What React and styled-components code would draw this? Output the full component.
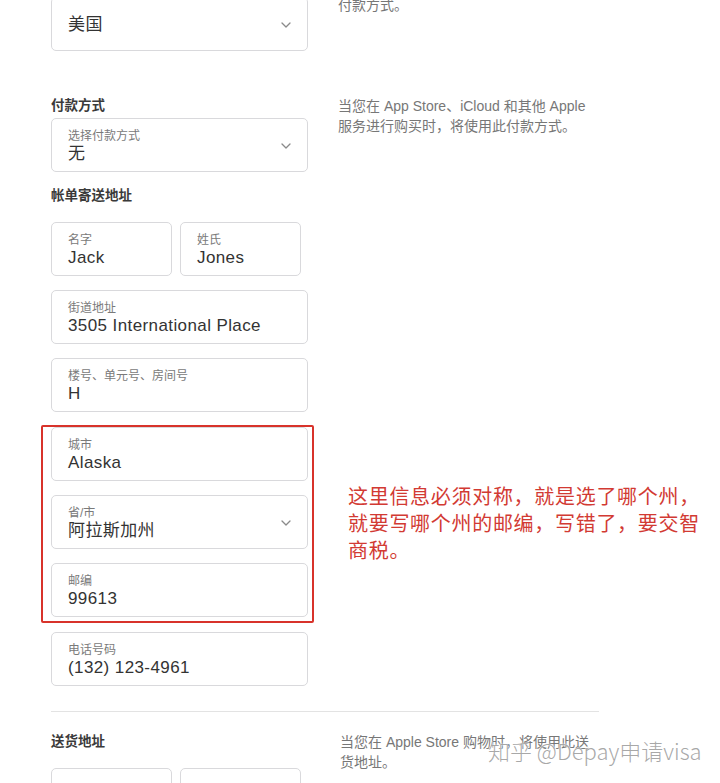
import React from "react";
import styled, { createGlobalStyle } from "styled-components";

const Global = createGlobalStyle`
  html, body { margin: 0; padding: 0; background: #fff; overflow: hidden; }
  body { font-family: "Liberation Sans", "Noto Sans CJK SC", sans-serif; color: #333; }
  * { box-sizing: border-box; }
`;

const Page = styled.div`
  position: relative;
  margin-top: -5px;
  padding-left: 51px;
  height: 788px;
  overflow: hidden;
`;

const Section = styled.section`
  display: grid;
  grid-template-columns: 257px 252px;
  column-gap: 30px;
  align-items: start;
  margin-top: ${(p) => p.$mt || 0}px;
`;

const Column = styled.div`
  display: flex;
  flex-direction: column;
  margin-top: ${(p) => p.$mt || 0}px;
`;

const Heading = styled.h3`
  margin: 0;
  font-size: 13.5px;
  line-height: 20px;
  font-weight: 700;
  color: #3a3a3a;
  margin-top: ${(p) => p.$mt || 0}px;
`;

const Desc = styled.p`
  margin: 0;
  font-size: 14px;
  line-height: 20px;
  color: #777;
  margin-left: ${(p) => p.$ml || 0}px;
`;

const Stack = styled.div`
  display: flex;
  flex-direction: column;
  gap: 14px;
  margin-top: ${(p) => p.$mt || 0}px;
`;

const Row = styled.div`
  display: flex;
  gap: 8px;
  margin-top: ${(p) => p.$mt || 0}px;
`;

const Box = styled.div`
  position: relative;
  width: ${(p) => p.$w || 257}px;
  height: 54px;
  border: 1px solid #d9d9dc;
  border-radius: 5px;
  background: #fff;
  padding: ${(p) => (p.$plain ? "0 16px" : "10px 16px 0")};
  display: flex;
  flex-direction: column;
  justify-content: ${(p) => (p.$plain ? "center" : "flex-start")};
`;

const Label = styled.div`
  font-size: 12px;
  line-height: 14px;
  color: #7a7a7a;
`;

const Value = styled.div`
  font-size: 17px;
  letter-spacing: 0.4px;
  line-height: 20px;
  color: #333;
  margin-top: ${(p) => (p.$plain ? 1 : 1)}px;
`;

const Chevron = styled.svg`
  position: absolute;
  right: 16px;
  top: 50%;
  margin-top: -2px;
  width: 10px;
  height: 6px;
`;

const AnnotatedRow = styled.div`
  display: flex;
  align-items: center;
`;

const Highlight = styled.div`
  box-sizing: content-box;
  width: 257px;
  padding: 0 4px 4px 8px;
  border: 2px solid #d8332b;
  border-radius: 2px;
  margin: -1px -6px -5px -10px;
  display: flex;
  flex-direction: column;
  gap: 14px;
`;

const Note = styled.div`
  margin-left: 40px;
  font-family: "Noto Sans CJK SC", sans-serif;
  font-size: 20px;
  letter-spacing: 0.7px;
  line-height: 27px;
  color: #d23a33;
  white-space: nowrap;
`;

const Divider = styled.hr`
  margin: 25px 0 0;
  border: 0;
  height: 1px;
  width: 548px;
  background: #e3e3e3;
`;

const Watermark = styled.div`
  position: absolute;
  left: 488px;
  top: 742px;
  font-family: "Noto Sans CJK SC", sans-serif;
  font-weight: 300;
  font-size: 22px;
  line-height: 26px;
  color: rgba(140, 140, 140, 0.75);
  text-shadow: 0 0 2px #fff, 0 0 1px #fff;
  white-space: nowrap;
  pointer-events: none;
`;

function Field({ label, value, select, w, plain }) {
  return (
    <Box $w={w} $plain={plain}>
      {label && <Label>{label}</Label>}
      {value !== undefined && <Value $plain={plain}>{value}</Value>}
      {select && (
        <Chevron viewBox="0 0 10 6">
          <path d="M1 1l4 4 4-4" fill="none" stroke="#8a8a8a" strokeWidth="1.3" strokeLinecap="round" strokeLinejoin="round" />
        </Chevron>
      )}
    </Box>
  );
}

export default function App() {
  return (
    <>
      <Global />
      <Page>
        <Section>
          <Column $mt={2}>
            <Field plain select value="美国" />
          </Column>
          <Desc>付款方式。</Desc>
        </Section>

        <Section $mt={45}>
          <Column>
            <Heading>付款方式</Heading>
            <Stack $mt={2}>
              <Field select label="选择付款方式" value="无" />
            </Stack>
          </Column>
          <Desc>当您在 App Store、iCloud 和其他 Apple 服务进行购买时，将使用此付款方式。</Desc>
        </Section>

        <Heading $mt={14}>帐单寄送地址</Heading>
        <Stack $mt={16}>
          <Row>
            <Field w={121} label="名字" value="Jack" />
            <Field w={121} label="姓氏" value="Jones" />
          </Row>
          <Field label="街道地址" value="3505 International Place" />
          <Field label="楼号、单元号、房间号" value="H" />
          <AnnotatedRow>
            <Highlight>
              <Field label="城市" value="Alaska" />
              <Field select label="省/市" value="阿拉斯加州" />
              <Field label="邮编" value="99613" />
            </Highlight>
            <Note>
              这里信息必须对称，就是选了哪个州，
              <br />
              就要写哪个州的邮编，写错了，要交智
              <br />
              商税。
            </Note>
          </AnnotatedRow>
          <Field label="电话号码" value="(132) 123-4961" />
        </Stack>

        <Divider />

        <Section $mt={20}>
          <Column>
            <Heading>送货地址</Heading>
            <Row $mt={16}>
              <Field w={121} />
              <Field w={121} />
            </Row>
          </Column>
          <Desc $ml={2}>当您在 Apple Store 购物时，将使用此送货地址。</Desc>
        </Section>

        <Watermark>知乎 @Depay申请visa</Watermark>
      </Page>
    </>
  );
}
